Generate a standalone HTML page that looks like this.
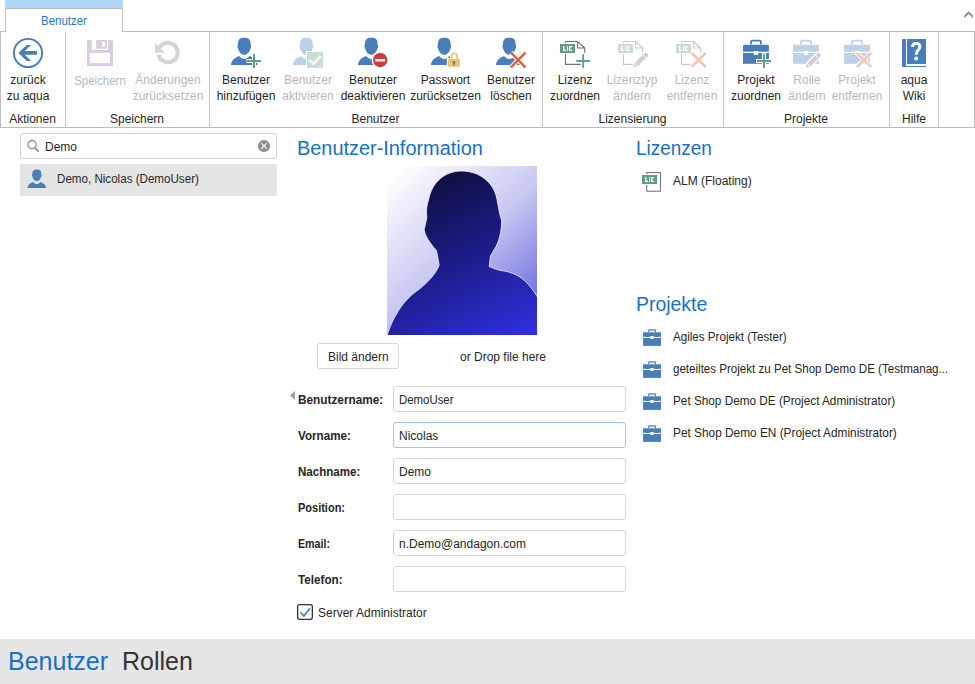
<!DOCTYPE html>
<html><head><meta charset="utf-8"><style>
body{margin:0;width:975px;height:684px;position:relative;overflow:hidden;background:#fff;font-family:"Liberation Sans",sans-serif;color:#262626}
.a{position:absolute}
.t{position:absolute;white-space:nowrap;font-size:12px;line-height:16px}
.c{text-align:center}
.d{color:#b8b8b8}
svg{position:absolute;overflow:visible}
.sep{position:absolute;top:32px;width:1px;height:95px;background:#c8c8c8}
.tb{position:absolute;left:393px;width:231px;height:24px;border:1px solid #d6d6d6;border-radius:3px;background:#fff}
.lb{position:absolute;left:298px;font-weight:bold;font-size:12px;line-height:16px;white-space:nowrap}
.tv{position:absolute;left:399px;font-size:12px;line-height:16px;white-space:nowrap}
</style></head><body>
<!-- RIBBON -->
<div class="a" style="left:5px;top:0;width:118px;height:8px;background:#afd5fb"></div>
<div class="a" style="left:5px;top:8px;width:116px;height:23px;border:1px solid #bcbcbc;border-bottom:none;background:#fff"></div>
<div class="a" style="left:0;top:31px;width:5px;height:1px;background:#bcbcbc"></div>
<div class="a" style="left:123px;top:31px;width:852px;height:1px;background:#bcbcbc"></div>
<div class="a" style="left:0;top:32px;width:1px;height:96px;background:#bcbcbc"></div>
<div class="a" style="left:974px;top:32px;width:1px;height:96px;background:#bcbcbc"></div>
<div class="a" style="left:0;top:127px;width:975px;height:1px;background:#bcbcbc"></div>
<div class="t" style="left:41px;top:13px;color:#2a74c9;transform:scaleX(0.955);transform-origin:0 0">Benutzer</div>
<svg style="left:960px;top:8px" width="16" height="14" viewBox="960 8 16 14"><path d="M964.3,15.5 L968.6,11.2 L972.9,15.5 V18.3 L968.6,14 L964.3,18.3 Z" fill="#8e8e8e"/></svg>
<div class="sep" style="left:65px"></div>
<div class="sep" style="left:209px"></div>
<div class="sep" style="left:542px"></div>
<div class="sep" style="left:723px"></div>
<div class="sep" style="left:889px"></div>
<div class="sep" style="left:938px"></div>

<!-- labels -->
<div class="t c" style="left:0;width:56px;top:72px">zurück<br>zu aqua</div>
<div class="t c" style="left:0;width:65px;top:111px">Aktionen</div>
<div class="t c d" style="left:70px;width:60px;top:73px;transform:scaleX(0.955)">Speichern</div>
<div class="t c d" style="left:128px;width:80px;top:72px">Änderungen<br>zurücksetzen</div>
<div class="t c" style="left:65px;width:144px;top:111px">Speichern</div>
<div class="t c" style="left:212px;width:68px;top:72px">Benutzer<br>hinzufügen</div>
<div class="t c d" style="left:278px;width:60px;top:72px">Benutzer<br>aktivieren</div>
<div class="t c" style="left:338px;width:70px;top:72px">Benutzer<br>deaktivieren</div>
<div class="t c" style="left:408px;width:75px;top:72px">Passwort<br>zurücksetzen</div>
<div class="t c" style="left:483px;width:56px;top:72px">Benutzer<br>löschen</div>
<div class="t c" style="left:209px;width:333px;top:111px">Benutzer</div>
<div class="t c" style="left:545px;width:60px;top:72px">Lizenz<br>zuordnen</div>
<div class="t c d" style="left:602px;width:60px;top:72px">Lizenztyp<br>ändern</div>
<div class="t c d" style="left:662px;width:60px;top:72px">Lizenz<br>entfernen</div>
<div class="t c" style="left:542px;width:181px;top:111px">Lizensierung</div>
<div class="t c" style="left:726px;width:60px;top:72px">Projekt<br>zuordnen</div>
<div class="t c d" style="left:777px;width:60px;top:72px">Rolle<br>ändern</div>
<div class="t c d" style="left:827px;width:60px;top:72px">Projekt<br>entfernen</div>
<div class="t c" style="left:723px;width:166px;top:111px">Projekte</div>
<div class="t c" style="left:889px;width:50px;top:72px">aqua<br>Wiki</div>
<div class="t c" style="left:889px;width:50px;top:111px">Hilfe</div>

<!-- ICONS -->
<!--ICONS_START-->
<svg style="left:8px;top:34px" width="40" height="40" viewBox="0 0 40 40"><circle cx="20" cy="19" r="14.1" fill="none" stroke="#4a7ebb" stroke-width="1.9"/><path d="M10.4,18.9 L18.7,11 H23.1 L16.8,17 H29 V20.8 H16.8 L23.1,26.9 H18.7 Z" fill="#4a7ebb"/></svg>
<svg style="left:84px;top:36px" width="32" height="32" viewBox="0 0 32 32"><rect x="3" y="4" width="26" height="26" rx="1.6" fill="#d9cbe4"/><rect x="7.7" y="4" width="16.5" height="10" fill="#fff"/><rect x="12.1" y="4" width="10.8" height="8.7" fill="#d9cbe4"/><rect x="18" y="5.8" width="3" height="5.2" fill="#fff"/><rect x="5.8" y="16.8" width="20.2" height="10.3" fill="#fff"/></svg>
<svg style="left:150px;top:36px" width="32" height="32" viewBox="0 0 32 32"><path d="M8.48,18.7 A9.75,9.75 0 1 0 9.56,11.7" fill="none" stroke="#d4d4d4" stroke-width="4.1"/><path d="M5,7 V16.7 H14.7 Z" fill="#d4d4d4"/></svg>
<svg style="left:226px;top:34px" width="40" height="40" viewBox="0 0 40 40"><path d="M11.9,11.2 C11.9,5.3 13.8,3.8 18.3,3.8 C22.8,3.8 24.7,5.3 24.7,11.2 C25.4,11.5 25.4,13.5 24.6,14 C24,17.6 21.4,20.8 18.3,20.8 C15.2,20.8 12.6,17.6 12,14 C11.2,13.5 11.2,11.5 11.9,11.2 Z" fill="#4a7ebb"/><path d="M5,31 C5,27 8.5,23.6 13.2,22 C14.8,24 16.4,25 18.3,25 C20.2,25 21.8,24 23.4,22 C28.1,23.6 31.6,27 31.6,31 Z" fill="#4a7ebb"/><path d="M28,19.5 V34.5 M20.5,27 H35.5" stroke="#fff" stroke-width="4"/><path d="M28,20 V34 M21,27 H35" stroke="#62a086" stroke-width="2"/></svg>
<svg style="left:288px;top:34px" width="40" height="40" viewBox="0 0 40 40"><path d="M11.9,11.2 C11.9,5.3 13.8,3.8 18.3,3.8 C22.8,3.8 24.7,5.3 24.7,11.2 C25.4,11.5 25.4,13.5 24.6,14 C24,17.6 21.4,20.8 18.3,20.8 C15.2,20.8 12.6,17.6 12,14 C11.2,13.5 11.2,11.5 11.9,11.2 Z" fill="#bcd0e7"/><path d="M5,31 C5,27 8.5,23.6 13.2,22 C14.8,24 16.4,25 18.3,25 C20.2,25 21.8,24 23.4,22 C28.1,23.6 31.6,27 31.6,31 Z" fill="#bcd0e7"/><rect x="18" y="17" width="18" height="17.8" fill="#fff"/><rect x="19" y="18" width="16" height="15.8" fill="#c9ddd5"/><path d="M21.3,25.8 L25.4,29.9 L32.5,22.3" fill="none" stroke="#fff" stroke-width="2.2"/></svg>
<svg style="left:352.8px;top:34px" width="40" height="40" viewBox="0 0 40 40"><path d="M11.9,11.2 C11.9,5.3 13.8,3.8 18.3,3.8 C22.8,3.8 24.7,5.3 24.7,11.2 C25.4,11.5 25.4,13.5 24.6,14 C24,17.6 21.4,20.8 18.3,20.8 C15.2,20.8 12.6,17.6 12,14 C11.2,13.5 11.2,11.5 11.9,11.2 Z" fill="#4a7ebb"/><path d="M5,31 C5,27 8.5,23.6 13.2,22 C14.8,24 16.4,25 18.3,25 C20.2,25 21.8,24 23.4,22 C28.1,23.6 31.6,27 31.6,31 Z" fill="#4a7ebb"/><circle cx="27.2" cy="26" r="8.6" fill="#fff"/><circle cx="27.2" cy="26" r="7.6" fill="#d7d7d7"/><circle cx="27.2" cy="26" r="7.1" fill="#d03b3b"/><rect x="22.2" y="25" width="9.8" height="2.5" fill="#eef6f6"/></svg>
<svg style="left:426px;top:34px" width="40" height="40" viewBox="0 0 40 40"><path d="M11.9,11.2 C11.9,5.3 13.8,3.8 18.3,3.8 C22.8,3.8 24.7,5.3 24.7,11.2 C25.4,11.5 25.4,13.5 24.6,14 C24,17.6 21.4,20.8 18.3,20.8 C15.2,20.8 12.6,17.6 12,14 C11.2,13.5 11.2,11.5 11.9,11.2 Z" fill="#4a7ebb"/><path d="M5,31 C5,27 8.5,23.6 13.2,22 C14.8,24 16.4,25 18.3,25 C20.2,25 21.8,24 23.4,22 C28.1,23.6 31.6,27 31.6,31 Z" fill="#4a7ebb"/><rect x="20.9" y="24" width="14" height="10" fill="#fff"/><path d="M25.7,25 V22 A2.7,2.7 0 0 1 31.1,22 V25" fill="none" stroke="#fff" stroke-width="3.5"/><path d="M25.7,25 V22 A2.7,2.7 0 0 1 31.1,22 V25" fill="none" stroke="#e9c46a" stroke-width="1.6"/><rect x="21.9" y="25" width="12" height="7.7" fill="#e9c46a"/><circle cx="27.9" cy="28.3" r="1.4" fill="#7d7d7d"/><rect x="27.2" y="28.5" width="1.4" height="3.2" fill="#7d7d7d"/></svg>
<svg style="left:490.8px;top:34px" width="40" height="40" viewBox="0 0 40 40"><path d="M11.9,11.2 C11.9,5.3 13.8,3.8 18.3,3.8 C22.8,3.8 24.7,5.3 24.7,11.2 C25.4,11.5 25.4,13.5 24.6,14 C24,17.6 21.4,20.8 18.3,20.8 C15.2,20.8 12.6,17.6 12,14 C11.2,13.5 11.2,11.5 11.9,11.2 Z" fill="#4a7ebb"/><path d="M5,31 C5,27 8.5,23.6 13.2,22 C14.8,24 16.4,25 18.3,25 C20.2,25 21.8,24 23.4,22 C28.1,23.6 31.6,27 31.6,31 Z" fill="#4a7ebb"/><path d="M19.9,18.7 L34.5,33.3 M34.5,18.7 L19.9,33.3" stroke="#fff" stroke-width="4.5"/><path d="M19.9,18.7 L34.5,33.3 M34.5,18.7 L19.9,33.3" stroke="#e2603e" stroke-width="2.5"/></svg>
<svg style="left:556px;top:34px" width="40" height="40" viewBox="0 0 40 40"><path d="M9.5,7.5 H21.6 L28.7,14 V18.7 M24.6,30.4 H9.5 V7.5 M21.6,7.5 V14 H28.7" fill="none" stroke="#707070" stroke-width="1.1"/><rect x="3" y="9" width="17" height="11" fill="#fff"/><rect x="4" y="10" width="15" height="9" fill="#5f9e83"/><path d="M7,12h1.4v3.7h1.6v1.3h-3Z M11,12h1.1v5h-1.1Z M13,12h3.2v1.3h-1.8v2.4h1.8v1.3h-3.2Z" fill="#fff"/><path d="M27.1,19.2 V34.8 M19.2,27 H34.9" stroke="#fff" stroke-width="4"/><path d="M27.1,20.2 V33.8 M20.2,27 H33.9" stroke="#62a086" stroke-width="1.8"/></svg>
<svg style="left:613.5px;top:34px" width="40" height="40" viewBox="0 0 40 40"><path d="M9.5,7.5 H21.6 L28.7,14 V18.7 M24.6,30.4 H9.5 V7.5 M21.6,7.5 V14 H28.7" fill="none" stroke="#c9c9c9" stroke-width="1.1"/><rect x="3" y="9" width="17" height="11" fill="#fff"/><rect x="4" y="10" width="15" height="9" fill="#c8ddd4"/><path d="M7,12h1.4v3.7h1.6v1.3h-3Z M11,12h1.1v5h-1.1Z M13,12h3.2v1.3h-1.8v2.4h1.8v1.3h-3.2Z" fill="#fff"/><g transform="translate(19.5,33.3) rotate(-45)"><path d="M-0.8,0 L3.2,-3.4 H20.6 V3.4 H3.2 Z" fill="#fff"/><path d="M0,0 L3.6,-2.3 V2.3 Z" fill="#d0d0d0"/><rect x="4.3" y="-2.3" width="11" height="4.6" fill="#d0d0d0"/><path d="M16,-2.3 H18.4 Q19.6,-2.3 19.6,-1.1 V1.1 Q19.6,2.3 18.4,2.3 H16 Z" fill="#d0d0d0"/></g></svg>
<svg style="left:671.5px;top:34px" width="40" height="40" viewBox="0 0 40 40"><path d="M9.5,7.5 H21.6 L28.7,14 V18.7 M24.6,30.4 H9.5 V7.5 M21.6,7.5 V14 H28.7" fill="none" stroke="#c9c9c9" stroke-width="1.1"/><rect x="3" y="9" width="17" height="11" fill="#fff"/><rect x="4" y="10" width="15" height="9" fill="#c8ddd4"/><path d="M7,12h1.4v3.7h1.6v1.3h-3Z M11,12h1.1v5h-1.1Z M13,12h3.2v1.3h-1.8v2.4h1.8v1.3h-3.2Z" fill="#fff"/><path d="M19.5,19 L33.8,32.8 M33.8,19 L19.5,32.8" stroke="#fff" stroke-width="4.5"/><path d="M19.5,19 L33.8,32.8 M33.8,19 L19.5,32.8" stroke="#f5c3b4" stroke-width="2.5"/></svg>
<svg style="left:736px;top:34px" width="40" height="40" viewBox="0 0 40 40"><path d="M15,10.2 V7.9 Q15,6.7 16.2,6.7 H23.8 Q25,6.7 25,7.9 V10.2" fill="none" stroke="#4a7ebb" stroke-width="1.8"/><path d="M7,17.8 V12 Q7,10.8 8.2,10.8 H31.7 Q32.9,10.8 32.9,12 V17.8 Z" fill="#4a7ebb"/><rect x="7" y="19" width="25.9" height="10.8" fill="#4a7ebb"/><rect x="17.8" y="17" width="4.4" height="4" fill="#fff"/><path d="M28,19.2 V34.8 M20,27.1 H36" stroke="#fff" stroke-width="4"/><path d="M28,20.2 V33.8 M21,27.1 H35" stroke="#62a086" stroke-width="2"/></svg>
<svg style="left:786px;top:34px" width="40" height="40" viewBox="0 0 40 40"><path d="M15,10.2 V7.9 Q15,6.7 16.2,6.7 H23.8 Q25,6.7 25,7.9 V10.2" fill="none" stroke="#bfd1e8" stroke-width="1.8"/><path d="M7,17.8 V12 Q7,10.8 8.2,10.8 H31.7 Q32.9,10.8 32.9,12 V17.8 Z" fill="#bfd1e8"/><rect x="7" y="19" width="25.9" height="10.8" fill="#bfd1e8"/><rect x="17.8" y="17" width="4.4" height="4" fill="#fff"/><g transform="translate(20,33.6) rotate(-45)"><path d="M-0.8,0 L3.2,-3.4 H20.6 V3.4 H3.2 Z" fill="#fff"/><path d="M0,0 L3.6,-2.3 V2.3 Z" fill="#d0d0d0"/><rect x="4.3" y="-2.3" width="11" height="4.6" fill="#d0d0d0"/><path d="M16,-2.3 H18.4 Q19.6,-2.3 19.6,-1.1 V1.1 Q19.6,2.3 18.4,2.3 H16 Z" fill="#d0d0d0"/></g></svg>
<svg style="left:837px;top:34px" width="40" height="40" viewBox="0 0 40 40"><path d="M15,10.2 V7.9 Q15,6.7 16.2,6.7 H23.8 Q25,6.7 25,7.9 V10.2" fill="none" stroke="#bfd1e8" stroke-width="1.8"/><path d="M7,17.8 V12 Q7,10.8 8.2,10.8 H31.7 Q32.9,10.8 32.9,12 V17.8 Z" fill="#bfd1e8"/><rect x="7" y="19" width="25.9" height="10.8" fill="#bfd1e8"/><rect x="17.8" y="17" width="4.4" height="4" fill="#fff"/><path d="M19.8,19 L34.2,32.8 M34.2,19 L19.8,32.8" stroke="#fff" stroke-width="4.5"/><path d="M19.8,19 L34.2,32.8 M34.2,19 L19.8,32.8" stroke="#f5c3b4" stroke-width="2.5"/></svg>
<svg style="left:896px;top:34px" width="36" height="36" viewBox="0 0 36 36"><path d="M6,33 V6 Q6,5 7,5 H10 V32 H30 V33 H7 Q6,33 6,32 Z" fill="#4a7ebb"/><rect x="11" y="5" width="19" height="25" fill="#4a7ebb"/><path d="M16.4,13 C16.6,10.5 18.3,9.4 20.2,9.4 C22.5,9.4 23.9,10.9 23.9,12.9 C23.9,15.9 20.3,16.3 20.3,19.9 V20.8" fill="none" stroke="#fff" stroke-width="2.9"/><circle cx="20.1" cy="24.4" r="2" fill="#fff"/></svg>
<!--ICONS_END-->

<!-- LEFT PANEL -->
<!--LEFT_START-->
<div class="a" style="left:20px;top:133px;width:255px;height:24px;border:1px solid #d2d2d2;border-radius:3px;background:#fff"></div>

<svg style="left:24px;top:137px" width="18" height="18" viewBox="0 0 18 18"><circle cx="8" cy="7.6" r="4.1" fill="none" stroke="#928a84" stroke-width="1.3"/><path d="M10.9,10.6 L14.6,14.6" stroke="#928a84" stroke-width="1.6"/></svg>
<div class="t" style="left:45px;top:139px">Demo</div>
<svg style="left:256px;top:138px" width="16" height="16" viewBox="0 0 16 16"><circle cx="8" cy="8" r="6" fill="#8a8a8a"/><path d="M5.2,5.2 L10.8,10.8 M10.8,5.2 L5.2,10.8" stroke="#fff" stroke-width="1.2"/></svg>
<div class="a" style="left:20px;top:164px;width:257px;height:32px;background:#e5e5e5"></div>
<svg style="left:23.8px;top:166.8px" width="28" height="26.45" viewBox="0 0 40 38.9" preserveAspectRatio="none"><g transform="scale(1)"><path d="M11.9,11.2 C11.9,5.3 13.8,3.8 18.3,3.8 C22.8,3.8 24.7,5.3 24.7,11.2 C25.4,11.5 25.4,13.5 24.6,14 C24,17.6 21.4,20.8 18.3,20.8 C15.2,20.8 12.6,17.6 12,14 C11.2,13.5 11.2,11.5 11.9,11.2 Z" fill="#4a7ebb"/><path d="M5,31 C5,27 8.5,23.6 13.2,22 C14.8,24 16.4,25 18.3,25 C20.2,25 21.8,24 23.4,22 C28.1,23.6 31.6,27 31.6,31 Z" fill="#4a7ebb"/></g></svg>
<div class="t" style="left:57px;top:171px;transform:scaleX(0.967);transform-origin:0 0">Demo, Nicolas (DemoUser)</div>

<!--LEFT_END-->

<!-- CENTER -->
<!--CENTER_START-->
<div class="a" style="left:297px;top:136px;font-size:20px;line-height:24px;color:#1670c8;white-space:nowrap;transform:scaleX(0.995);transform-origin:0 0">Benutzer-Information</div>
<svg style="left:387px;top:166px;overflow:hidden" width="150" height="169" viewBox="387 166 150 169">
<defs>
<linearGradient id="bg" x1="0.1" y1="0" x2="0.9" y2="1"><stop offset="0" stop-color="#ffffff"/><stop offset="0.5" stop-color="#c8c8f2"/><stop offset="1" stop-color="#6060dc"/></linearGradient>
<linearGradient id="fg" x1="0.3" y1="0" x2="0.75" y2="1"><stop offset="0" stop-color="#0e0e3a"/><stop offset="0.45" stop-color="#1a1a80"/><stop offset="1" stop-color="#2f2fdc"/></linearGradient>
</defs>
<rect x="387" y="166" width="150" height="169" fill="url(#bg)"/>
<path d="M461.6,171 C479,171 494,182 497,199.5 L499.7,214 501.6,220.5 C501.6,232 499,241 495.8,246.8 L490.5,256 489.2,266.6 C494,268.5 497,270 501,270.5 C512,272 520,276 526,282 C533,289 538,297 540,303 V345 H384 C388,332 392,321 395.8,315.3 C403,302 411,295 419.5,289 C428,282 435,275 439.2,265.3 L436.6,250.8 C430,243 425,236 424.2,229.7 L426.8,218 C426,210 427,204 428.7,199.5 C432,182 445,171 461.6,171 Z" fill="url(#fg)" stroke="#f4f4ff" stroke-width="0.9" stroke-opacity="0.85"/>
</svg>
<div class="a" style="left:317px;top:343px;width:80px;height:24px;border:1px solid #d6d6d6;border-radius:3px;background:#fff"></div>
<div class="t" style="left:328px;top:349px">Bild ändern</div>
<div class="t" style="left:460px;top:349px">or Drop file here</div>
<svg style="left:288px;top:389px" width="10" height="14" viewBox="288 389 10 14"><path d="M290,395.4 L295,390.7 V400 Z" fill="#a0a0a0"/></svg>
<div class="lb" style="top:392px;transform:scaleX(0.984);transform-origin:0 0">Benutzername:</div>
<div class="lb" style="top:428px;transform:scaleX(0.972);transform-origin:0 0">Vorname:</div>
<div class="lb" style="top:464px;transform:scaleX(0.964);transform-origin:0 0">Nachname:</div>
<div class="lb" style="top:500px;transform:scaleX(0.916);transform-origin:0 0">Position:</div>
<div class="lb" style="top:536px;transform:scaleX(0.89);transform-origin:0 0">Email:</div>
<div class="lb" style="top:572px;transform:scaleX(0.974);transform-origin:0 0">Telefon:</div>
<div class="tb" style="top:386px"></div>
<div class="tb" style="top:422px;border-color:#a0c4e8"></div>
<div class="tb" style="top:458px"></div>
<div class="tb" style="top:494px"></div>
<div class="tb" style="top:530px"></div>
<div class="tb" style="top:566px"></div>
<div class="tv" style="top:392px;transform:scaleX(0.95);transform-origin:0 0">DemoUser</div>
<div class="tv" style="top:428px">Nicolas</div>
<div class="tv" style="top:464px">Demo</div>
<div class="tv" style="top:536px">n.Demo@andagon.com</div>
<svg style="left:296px;top:603px" width="18" height="18" viewBox="296 603 18 18"><rect x="297.65" y="604.65" width="14.7" height="14.7" rx="2" fill="#fff" stroke="#333" stroke-width="1.3"/><path d="M300.5,612.3 L303.8,616 L309.9,608.3" fill="none" stroke="#3580d4" stroke-width="1.6"/></svg>
<div class="t" style="left:318px;top:605px">Server Administrator</div>

<!--CENTER_END-->

<!-- RIGHT -->
<!--RIGHT_START-->
<div class="a" style="left:636px;top:136px;font-size:20px;line-height:24px;color:#1670c8;white-space:nowrap;transform:scaleX(0.945);transform-origin:0 0">Lizenzen</div>
<svg style="left:636px;top:166px" width="30" height="30" viewBox="636 166 30 30"><rect x="646.7" y="172.6" width="13.8" height="18.6" fill="none" stroke="#777" stroke-width="1.1"/><rect x="641" y="174" width="17" height="11" fill="#fff"/><rect x="642" y="175" width="15" height="9" fill="#5f9e83"/><path d="M645,177h1.4v3.7h1.6v1.3h-3Z M649,177h1.1v5h-1.1Z M651,177h3.2v1.3h-1.8v2.4h1.8v1.3h-3.2Z" fill="#fff"/></svg>
<div class="t" style="left:673px;top:173px">ALM (Floating)</div>
<div class="a" style="left:636px;top:292px;font-size:20px;line-height:24px;color:#1670c8;white-space:nowrap;transform:scaleX(0.97);transform-origin:0 0">Projekte</div>
<svg style="left:640px;top:325px" width="24" height="24" viewBox="640 325 24 24"><path d="M648.8,332.3 V330.6 Q648.8,329.8 649.6,329.8 H654.6 Q655.4,329.8 655.4,330.6 V332.3" fill="none" stroke="#4a7ebb" stroke-width="1.3"/><rect x="643" y="332.3" width="18" height="4.6" fill="#4a7ebb"/><rect x="643" y="338" width="18" height="7.9" fill="#4a7ebb"/><rect x="650.5" y="336" width="3" height="3" fill="#fff"/></svg>
<div class="t" style="left:673px;top:329px;transform:scaleX(0.968);transform-origin:0 0">Agiles Projekt (Tester)</div>
<svg style="left:640px;top:357px" width="24" height="24" viewBox="640 357 24 24"><path d="M648.8,364.3 V362.6 Q648.8,361.8 649.6,361.8 H654.6 Q655.4,361.8 655.4,362.6 V364.3" fill="none" stroke="#4a7ebb" stroke-width="1.3"/><rect x="643" y="364.3" width="18" height="4.6" fill="#4a7ebb"/><rect x="643" y="370" width="18" height="7.9" fill="#4a7ebb"/><rect x="650.5" y="368" width="3" height="3" fill="#fff"/></svg>
<div class="t" style="left:673px;top:361px;transform:scaleX(0.964);transform-origin:0 0">geteiltes Projekt zu Pet Shop Demo DE (Testmanag...</div>
<svg style="left:640px;top:389px" width="24" height="24" viewBox="640 389 24 24"><path d="M648.8,396.3 V394.6 Q648.8,393.8 649.6,393.8 H654.6 Q655.4,393.8 655.4,394.6 V396.3" fill="none" stroke="#4a7ebb" stroke-width="1.3"/><rect x="643" y="396.3" width="18" height="4.6" fill="#4a7ebb"/><rect x="643" y="402" width="18" height="7.9" fill="#4a7ebb"/><rect x="650.5" y="400" width="3" height="3" fill="#fff"/></svg>
<div class="t" style="left:673px;top:393px;transform:scaleX(0.98);transform-origin:0 0">Pet Shop Demo DE (Project Administrator)</div>
<svg style="left:640px;top:421px" width="24" height="24" viewBox="640 421 24 24"><path d="M648.8,428.3 V426.6 Q648.8,425.8 649.6,425.8 H654.6 Q655.4,425.8 655.4,426.6 V428.3" fill="none" stroke="#4a7ebb" stroke-width="1.3"/><rect x="643" y="428.3" width="18" height="4.6" fill="#4a7ebb"/><rect x="643" y="434" width="18" height="7.9" fill="#4a7ebb"/><rect x="650.5" y="432" width="3" height="3" fill="#fff"/></svg>
<div class="t" style="left:673px;top:425px;transform:scaleX(0.987);transform-origin:0 0">Pet Shop Demo EN (Project Administrator)</div>

<!--RIGHT_END-->

<!-- BOTTOM -->
<div class="a" style="left:0;top:639px;width:975px;height:45px;background:#e6e6e6"></div>
<div class="a" style="left:8px;top:646px;font-size:25px;line-height:30px;color:#1670c8;white-space:nowrap">Benutzer</div>
<div class="a" style="left:122px;top:646px;font-size:25px;line-height:30px;color:#333;white-space:nowrap">Rollen</div>
</body></html>
